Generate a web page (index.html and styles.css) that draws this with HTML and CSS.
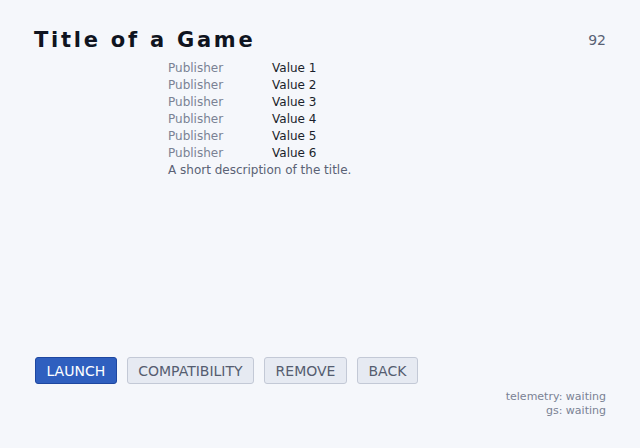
FILE: index.html
```html
<!DOCTYPE html>
<html>
<head>
<meta charset="utf-8">
<link rel="stylesheet" href="styles.css">
</head>
<body>
<div class="page">
  <header class="head">
    <h1 class="title">Title of a Game</h1>
    <div class="score">92</div>
  </header>
  <div class="meta">
    <div class="row"><span class="label">Publisher</span><span class="value">Value 1</span></div>
    <div class="row"><span class="label">Publisher</span><span class="value">Value 2</span></div>
    <div class="row"><span class="label">Publisher</span><span class="value">Value 3</span></div>
    <div class="row"><span class="label">Publisher</span><span class="value">Value 4</span></div>
    <div class="row"><span class="label">Publisher</span><span class="value">Value 5</span></div>
    <div class="row"><span class="label">Publisher</span><span class="value">Value 6</span></div>
    <p class="desc">A short description of the title.</p>
  </div>
  <div class="spacer"></div>
  <div class="actions">
    <button class="btn primary">LAUNCH</button>
    <button class="btn">COMPATIBILITY</button>
    <button class="btn">REMOVE</button>
    <button class="btn">BACK</button>
  </div>
  <footer class="status">
    <div>telemetry: waiting</div>
    <div>gs: waiting</div>
  </footer>
</div>
</body>
</html>
```
FILE: styles.css
```css
html, body {
  margin: 0;
  padding: 0;
  background: #f5f7fb;
  font-family: "DejaVu Sans", sans-serif;
}
.page {
  width: 640px;
  height: 448px;
  box-sizing: border-box;
  padding: 28px 34px 0 34px;
  display: flex;
  flex-direction: column;
}
.head {
  display: flex;
  justify-content: space-between;
  align-items: center;
}
.title {
  margin: 0;
  font-size: 21px;
  font-weight: bold;
  letter-spacing: 2.75px;
  color: #0f1420;
  line-height: 24px;
}
.score {
  font-size: 14px;
  color: #5a6275;
}
.meta {
  margin-top: 8px;
  padding-left: 134px;
  font-size: 12px;
}
.row {
  display: flex;
  line-height: 17px;
}
.label {
  width: 104px;
  color: #7a8294;
}
.value {
  color: #1a1f2b;
}
.desc {
  margin: 0;
  line-height: 17px;
  color: #5a6275;
}
.spacer {
  flex: 1;
}
.actions {
  display: flex;
  gap: 10px;
  margin-left: 1px;
}
.btn {
  font-family: "DejaVu Sans", sans-serif;
  font-size: 14px;
  height: 27px;
  padding: 0 10.5px;
  border-radius: 3px;
  border: 1px solid #c3c9d6;
  background: #e6eaf2;
  color: #555d70;
}
.btn.primary {
  background: #2f5fbf;
  border-color: #1e47a0;
  color: #ffffff;
}
.status {
  margin-top: 6px;
  margin-bottom: 30px;
  text-align: right;
  font-size: 11px;
  line-height: 14px;
  color: #7a8294;
}
```
